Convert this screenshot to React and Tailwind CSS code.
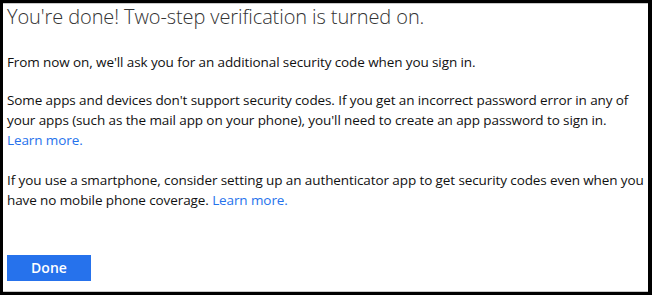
export default function App() {
  return (
    <div className="w-[652px] h-[295px] bg-black pt-[3px] pl-[3px] pr-[4px] pb-[3px]">
      <div
        className="h-full bg-white border-t border-b border-[#c8c8c8] flex flex-col px-[4px]"
        style={{ fontFamily: '"Open Sans", "Noto Sans", sans-serif' }}
      >
        <h1 className="text-[20px] font-light text-[#333] leading-[28px] -mt-[1px] tracking-[-0.1px]">
          You're done! Two-step verification is turned on.
        </h1>
        <div className="text-[13.5px] leading-[20px] text-[#111] tracking-[-0.1px]">
          <p className="mt-[21px]">
            From now on, we'll ask you for an additional security code when you sign in.
          </p>
          <p className="mt-[18px]">
            Some apps and devices don't support security codes. If you get an incorrect password error in any of
            <br />
            your apps (such as the mail app on your phone), you'll need to create an app password to sign in.
            <br />
            <a className="text-[#2672ec]">Learn more.</a>
          </p>
          <p className="mt-[20px]">
            If you use a smartphone, consider setting up an authenticator app to get security codes even when you
            <br />
            have no mobile phone coverage. <a className="text-[#2672ec]">Learn more.</a>
          </p>
        </div>
        <div className="mt-auto mb-[10px]">
          <button className="w-[84px] h-[26px] bg-[#2672ec] text-white text-[14px] font-semibold leading-none">
            Done
          </button>
        </div>
      </div>
    </div>
  );
}
